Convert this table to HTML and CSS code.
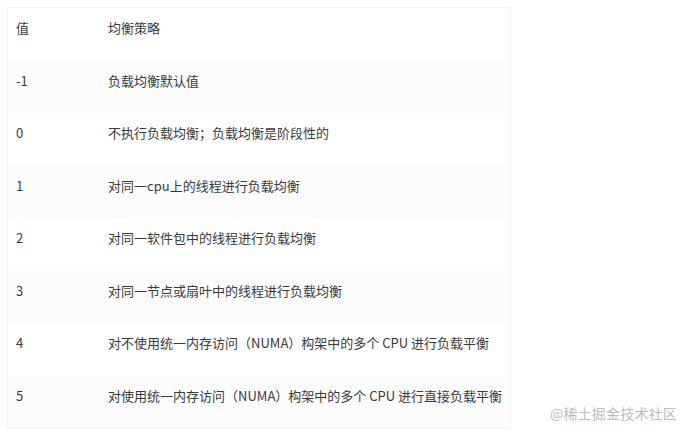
FILE: index.html
```html
<!DOCTYPE html>
<html lang="zh-CN">
<head>
<meta charset="utf-8">
<link rel="stylesheet" href="styles.css">
</head>
<body>
<div class="page">
  <table class="strategy">
    <tbody>
      <tr><td class="val">值</td><td>均衡策略</td></tr>
      <tr><td class="val">-1</td><td>负载均衡默认值</td></tr>
      <tr><td class="val">0</td><td>不执行负载均衡；负载均衡是阶段性的</td></tr>
      <tr><td class="val">1</td><td>对同一cpu上的线程进行负载均衡</td></tr>
      <tr><td class="val">2</td><td>对同一软件包中的线程进行负载均衡</td></tr>
      <tr><td class="val">3</td><td>对同一节点或扇叶中的线程进行负载均衡</td></tr>
      <tr><td class="val">4</td><td>对不使用统一内存访问（NUMA）构架中的多个 CPU 进行负载平衡</td></tr>
      <tr><td class="val">5</td><td>对使用统一内存访问（NUMA）构架中的多个 CPU 进行直接负载平衡</td></tr>
    </tbody>
  </table>
  <div class="watermark">@稀土掘金技术社区</div>
</div>
</body>
</html>
```
FILE: styles.css
```css
html, body {
  margin: 0;
  padding: 0;
  background: #ffffff;
}
.page {
  position: relative;
  width: 691px;
  height: 435px;
  padding: 7px;
  box-sizing: border-box;
  font-family: "Microsoft YaHei", "Noto Sans CJK SC", "Noto Sans", sans-serif;
  font-size: 13px;
  color: #3a3a3a;
}
.strategy {
  border-collapse: collapse;
  width: 504px;
  border: 1px solid #f3f3f3;
}
.strategy td {
  padding: 10px 8px 0 8px;
  height: 42.5px;
  line-height: 20px;
  vertical-align: top;
  white-space: nowrap;
}
.strategy td.val {
  width: 81px;
}
.strategy tr:nth-child(even) {
  background: #fcfcfc;
}
.watermark {
  position: absolute;
  right: 14px;
  top: 402px;
  font-size: 14px;
  line-height: 22px;
  color: #bdbdbd;
  letter-spacing: 0.2px;
}
```
